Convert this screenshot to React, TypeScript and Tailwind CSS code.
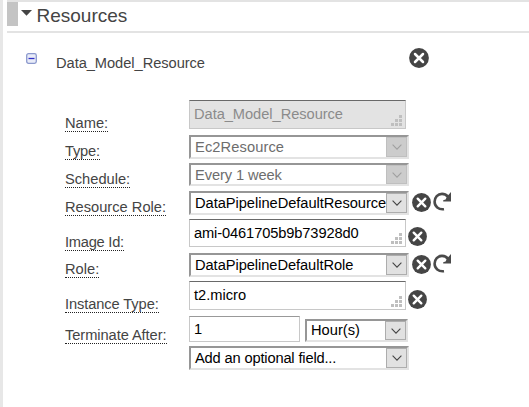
import type { ReactNode } from 'react';

function RemoveIcon({ className = '' }: { className?: string }) {
  return (
    <svg viewBox="0 0 20 20" className={`block shrink-0 ${className}`}>
      <circle cx="10" cy="10" r="9.9" fill="#454545" />
      <path d="M6 6l8 8M14 6l-8 8" stroke="#fff" strokeWidth="2.5" strokeLinecap="round" />
    </svg>
  );
}

function RefreshIcon() {
  return (
    <svg viewBox="0 0 18 19" className="mt-px ml-[2px] block h-[19px] w-[18px] shrink-0">
      <path d="M11 17.2C5.6 18 1.6 14.4 1.6 9.8C1.6 5.2 4.8 1.9 9 1.9C11.4 1.9 13.3 2.9 15 4.8" fill="none" stroke="#4a4a4a" strokeWidth="2.6" />
      <path d="M18 0V9.4H10.2V8.2L12.6 7.4L14 4.4Z" fill="#4a4a4a" />
    </svg>
  );
}

function Grip() {
  return (
    <svg viewBox="0 0 11 11" className="mr-[3px] mb-[2px] block h-[11px] w-[11px] shrink-0 self-end" fill="#bfbfbf" shapeRendering="crispEdges">
      <path d="M8 0h3v3h-3zM4 4h3v3h-3zM8 4h3v3h-3zM0 8h3v3h-3zM4 8h3v3h-3zM8 8h3v3h-3z" />
    </svg>
  );
}

function TextBox({ children, disabled = false, tall = true, textClass = '' }: { children: string; disabled?: boolean; tall?: boolean; textClass?: string }) {
  return (
    <div
      className={`flex shrink-0 justify-between border border-[#c8c8c8] pl-[4px] leading-[16px] ${
        tall ? 'w-[217px] border-t-[#696969] pt-[5px]' : 'h-[26px] w-[111px] border-t-[#999] pt-[4px]'
      } ${disabled ? 'h-[29px] bg-[#e3e3e3] text-[#8b8b8b]' : 'bg-white text-black'}`}
    >
      <span className={`whitespace-nowrap ${textClass}`}>{children}</span>
      {tall && <Grip />}
    </div>
  );
}

function Select({
  children,
  disabled = false,
  className = 'h-[23px] w-[220px]',
  textClass = 'pt-[2px]',
}: {
  children: string;
  disabled?: boolean;
  className?: string;
  textClass?: string;
}) {
  return (
    <div
      className={`flex shrink-0 border-2 border-t-[#969696] border-r-[#e3e3e3] border-b-[#e3e3e3] border-l-[#969696] bg-white leading-[16px] ${
        disabled ? 'text-[#6d6d6d]' : 'text-black'
      } ${className}`}
    >
      <span className={`min-w-0 flex-1 pl-[4px] whitespace-nowrap ${textClass}`}>{children}</span>
      <span
        className={`flex w-[21px] shrink-0 items-center justify-center border ${
          disabled ? 'border-[#bfbfbf] bg-[#ccc] text-[#a0a0a0]' : 'border-[#adadad] bg-[#e1e1e1] text-[#444]'
        }`}
      >
        <svg viewBox="0 0 10 6" className="h-[6px] w-[10px]" fill="none" stroke="currentColor" strokeWidth="1.1">
          <path d="M0.6 0.7L5 5.1L9.4 0.7" />
        </svg>
      </span>
    </div>
  );
}

function Row({ label, className, labelClass = 'mt-[8px]', children }: { label?: string; className: string; labelClass?: string; children: ReactNode }) {
  return (
    <div className={`flex items-start ${className}`}>
      <div className="w-[124px] shrink-0">
        {label && (
          <span className={`block w-fit border-b border-dotted border-[#222] leading-[16px] whitespace-nowrap text-[#444] ${labelClass}`}>{label}</span>
        )}
      </div>
      {children}
    </div>
  );
}

export default function App() {
  return (
    <div className="flex h-[407px] w-[529px] overflow-hidden bg-white font-['Liberation_Sans',Arial,sans-serif] text-[14.67px]">
      <div className="w-[3px] shrink-0 bg-[#e7e7e7]" />
      <main className="ml-[4px] flex-1">
        <header className="flex h-[33px] items-start border-y-2 border-[#e3e3e3]">
          <div className="h-[24px] w-[11px] bg-[#c4c4c4]" />
          <svg viewBox="0 0 11 6" className="mt-[8px] ml-[3px] h-[6px] w-[11px]">
            <path d="M0 0h11L5.5 5.8z" fill="#444" />
          </svg>
          <h1 className="mt-px ml-[4.5px] text-[19px] leading-[26px] text-[#444]">Resources</h1>
        </header>

        <div className="flex h-[67px] items-start">
          <svg viewBox="0 0 11 11" className="mt-[20px] ml-[19px] h-[11px] w-[11px] shrink-0">
            <rect x="0.7" y="0.7" width="9.6" height="9.6" rx="1.8" fill="#e9ecf8" stroke="#8b99cd" strokeWidth="1.3" />
            <path d="M2.5 5.5h6" stroke="#3030c8" strokeWidth="1.3" />
          </svg>
          <span className="mt-[22px] ml-[19px] w-[353px] leading-[16px] tracking-[-0.05px] text-[#444]">Data_Model_Resource</span>
          <RemoveIcon className="mt-[15px] h-[20px] w-[20px]" />
        </div>

        <section className="ml-[58px]">
          <Row label="Name:" className="h-[35px]" labelClass="mt-[15px]">
            <TextBox disabled textClass="tracking-[-0.05px]">Data_Model_Resource</TextBox>
          </Row>
          <Row label="Type:" className="h-[28px]" labelClass="mt-[8px] tracking-[-0.2px]">
            <Select disabled className="h-[24px] w-[220px]" textClass="pt-[2px] tracking-[0.1px]">Ec2Resource</Select>
          </Row>
          <Row label="Schedule:" className="h-[28px]">
            <Select disabled textClass="pt-[2px] tracking-[-0.1px]">Every 1 week</Select>
          </Row>
          <Row label="Resource Role:" className="h-[28px]">
            <Select className="h-[24px] w-[220px]" textClass="pt-[2px] tracking-[-0.04px]">DataPipelineDefaultResource</Select>
            <RemoveIcon className="mt-[2px] ml-[3px] h-[19px] w-[19px]" />
            <RefreshIcon />
          </Row>
          <Row label="Image Id:" className="h-[34px]" labelClass="mt-[15px] tracking-[-0.25px]">
            <div className="flex h-[28px]">
              <TextBox textClass="tracking-[-0.12px]">ami-0461705b9b73928d0</TextBox>
            </div>
            <RemoveIcon className="mt-[8px] ml-[2px] h-[19px] w-[19px]" />
          </Row>
          <Row label="Role:" className="h-[28px]">
            <Select className="h-[24px] w-[220px]" textClass="pt-[2px] tracking-[-0.06px]">DataPipelineDefaultRole</Select>
            <RemoveIcon className="mt-[2px] ml-[3px] h-[19px] w-[19px]" />
            <RefreshIcon />
          </Row>
          <Row label="Instance Type:" className="h-[35px]" labelClass="mt-[15px] tracking-[-0.1px]">
            <div className="flex h-[29px]">
              <TextBox>t2.micro</TextBox>
            </div>
            <RemoveIcon className="mt-[9px] ml-[2px] h-[19px] w-[19px]" />
          </Row>
          <Row label="Terminate After:" className="h-[30px]" labelClass="mt-[11px] tracking-[-0.07px]">
            <TextBox tall={false}>1</TextBox>
            <Select className="mt-[3px] ml-[5px] h-[23px] w-[103px]" textClass="pt-px">Hour(s)</Select>
          </Row>
          <Row className="h-[24px]">
            <Select className="h-[24px] w-[220px]" textClass="pt-[2px] tracking-[-0.16px]">Add an optional field...</Select>
          </Row>
        </section>
      </main>
    </div>
  );
}
